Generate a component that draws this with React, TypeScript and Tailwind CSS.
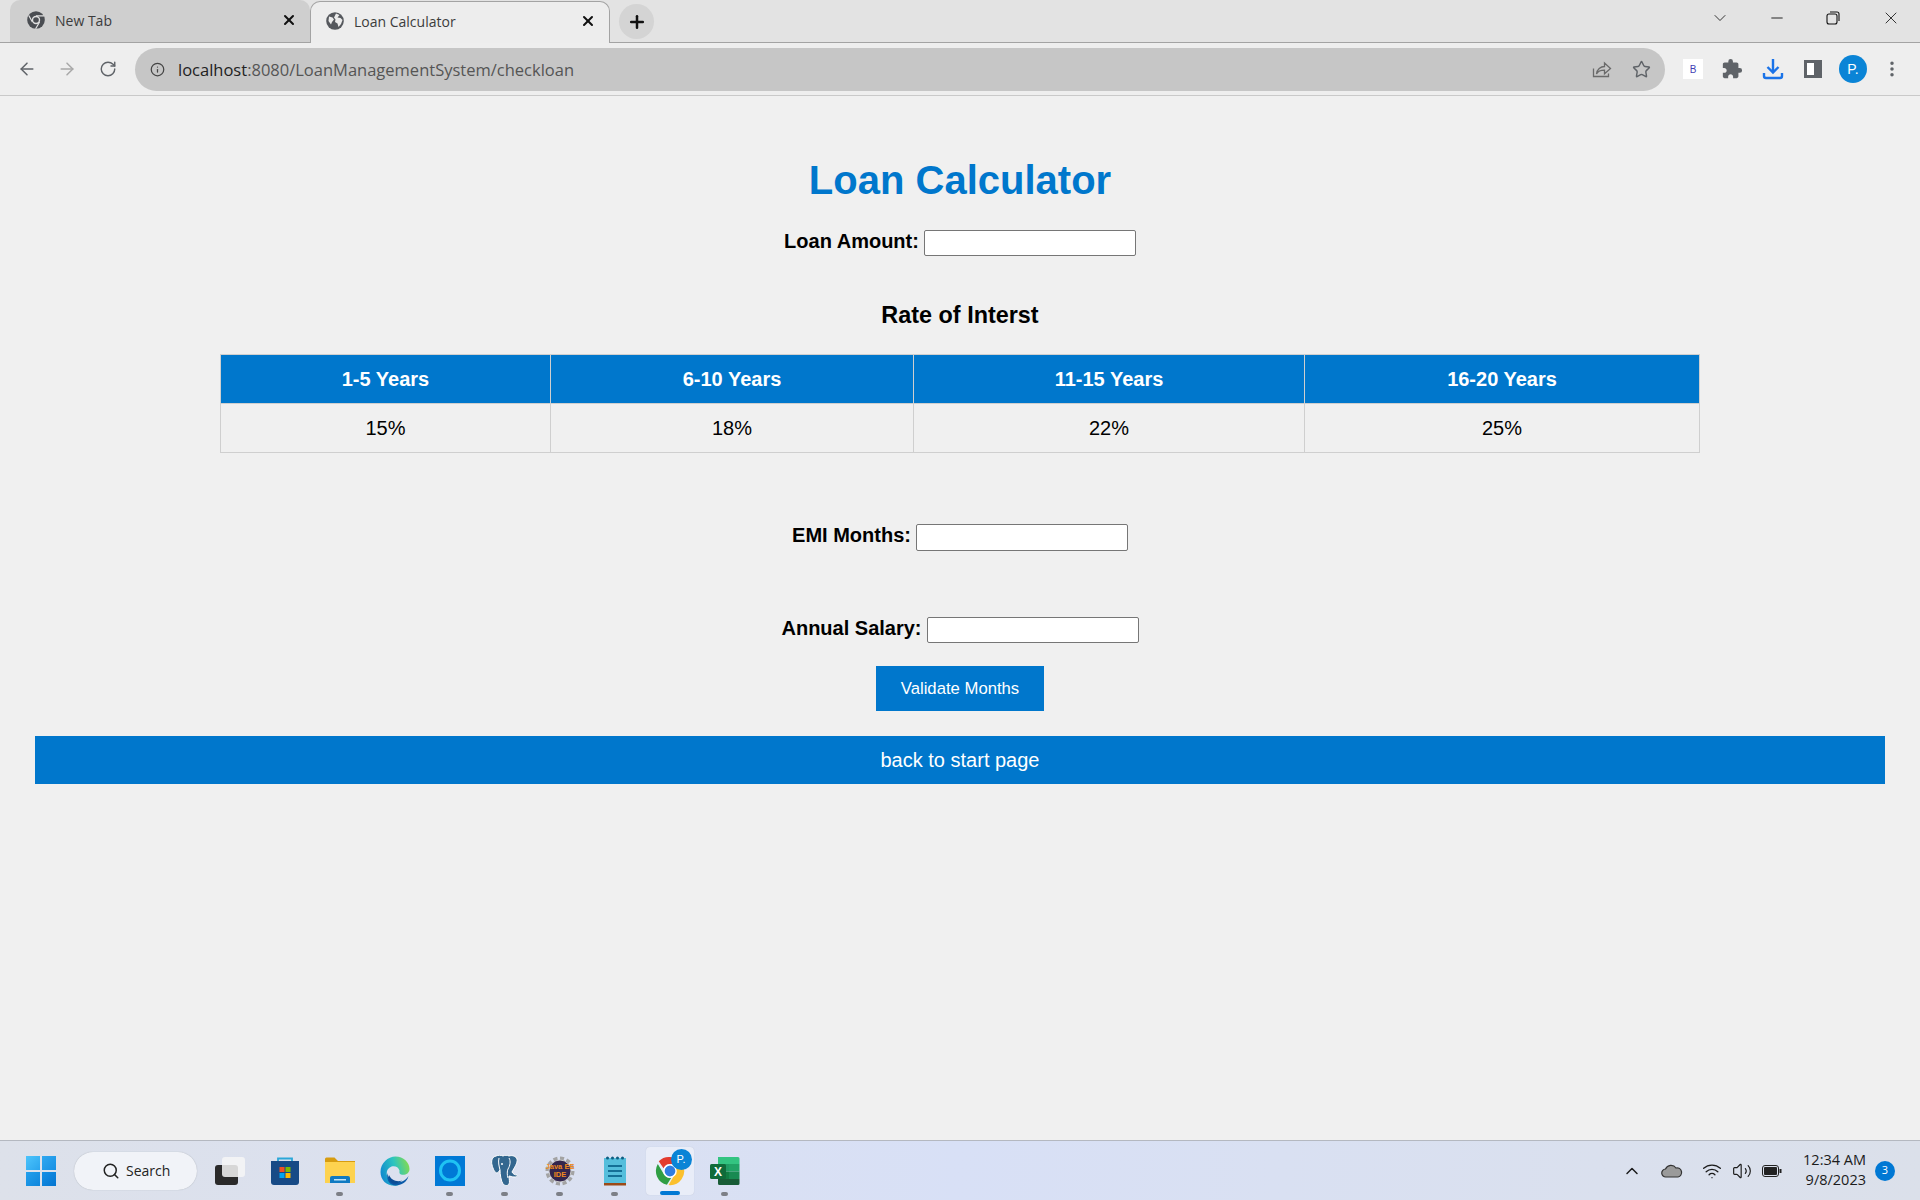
import { ArrowLeft, ArrowRight, RotateCw, Info, Star, X, Plus, ChevronDown, ChevronUp, Minus, Search, Wifi, Volume2, MoreVertical } from "lucide-react";
import { MdExtension } from "react-icons/md";

const CELL = "border border-[#cfcfcf] text-center";

function ChromeLogo({ size = 18 }: { size?: number }) {
  return (
    <svg width={size} height={size} viewBox="0 0 32 32">
      <path d="M16 1a15 15 0 0 1 13 7.5H16a7.5 7.5 0 0 0-6.9 4.6L4 5.6A15 15 0 0 1 16 1z" fill="#e33b2e" />
      <path d="M3 8.5l6.600 11.300a7.500 7.500 0 0 0 7.600 3.600L12.700 30.700A15 15 0 0 1 3 8.500z" fill="#2f9e44" />
      <path d="M29.600 9.600A15 15 0 0 1 14.500 31l6.500-11.200a7.500 7.500 0 0 0-.5-8.200z" fill="#fbc02d" />
      <circle cx="16" cy="16" r="6.500" fill="#2f7de1" stroke="#fff" strokeWidth="1.500" />
    </svg>
  );
}

function TabChromeMono() {
  return (
    <svg width="18" height="18" viewBox="0 0 18 18">
      <circle cx="9" cy="9" r="8.800" fill="#4a4d52" />
      <circle cx="9" cy="9" r="4.200" fill="#e0e0e0" />
      <circle cx="9" cy="9" r="2.800" fill="#4a4d52" />
      <path d="M9 4.800h8M5.400 11L1.800 4.500M12.600 11L8.600 17.800" stroke="#e0e0e0" strokeWidth="1.200" />
    </svg>
  );
}

function Globe() {
  return (
    <svg width="18" height="18" viewBox="0 0 18 18">
      <circle cx="9" cy="9" r="8.800" fill="#55585d" />
      <path d="M3 4.500l3.500 1 1.500 2-2 2.500-1 2.500-2.500-3.500zM10 1.500l3.500 1.500-2 2.500 3 .5 2 2-1.500 4-2.500 3-1-3.500-2.500-1.500 .5-2.500-1.500-2z" fill="#ececec" />
    </svg>
  );
}

function ShareIcon() {
  return (
    <svg width="20" height="20" viewBox="0 0 20 20" fill="none" stroke="#6a6a6a" strokeWidth="1.300">
      <path d="M1.500 9.500v8h15v-3" />
      <path d="M4.500 15c.5-4.500 4-7.500 8-7.500V4l6 5.500-6 5.300v-3.600c-3.500 0-6.500 1-8 3.800z" />
    </svg>
  );
}

function StoreIcon() {
  return (
    <svg width="30" height="30" viewBox="0 0 30 30">
      <path d="M8 6V2.500h14V6" fill="none" stroke="#2aa7d8" strokeWidth="1.800" />
      <path d="M1 5h28v21a3 3 0 0 1-3 3H4a3 3 0 0 1-3-3z" fill="#174a86" />
      <rect x="9.500" y="11" width="5" height="5" fill="#f25022" />
      <rect x="15.500" y="11" width="5" height="5" fill="#7fba00" />
      <rect x="9.500" y="17" width="5" height="5" fill="#00a4ef" />
      <rect x="15.500" y="17" width="5" height="5" fill="#ffb900" />
    </svg>
  );
}

function FolderIcon() {
  return (
    <svg width="30" height="28" viewBox="0 0 30 28">
      <path d="M0 2a1.500 1.500 0 0 1 1.500-1.500h8L13 4h17v8H0z" fill="#d79c10" />
      <path d="M0 5h30v21H0z" fill="#fdd24f" />
      <path d="M5 26v-5a2 2 0 0 1 2-2h16a2 2 0 0 1 2 2v5z" fill="#0f7ac2" />
      <rect x="9" y="22" width="12" height="1.500" fill="#bfe3f7" />
    </svg>
  );
}

function EdgeIcon() {
  return (
    <svg width="30" height="30" viewBox="0 0 30 30">
      <defs>
        <linearGradient id="edgeA" x1="0" y1="0.700" x2="1" y2="0.400">
          <stop offset="0" stopColor="#0f86d0" />
          <stop offset="0.550" stopColor="#2cc4c0" />
          <stop offset="1" stopColor="#7ed957" />
        </linearGradient>
      </defs>
      <path d="M0.500 16C.5 7 8 .5 15.500 .5 23.500 .5 29.500 6.500 29.500 13c0 5-5 6.500-8.500 5.500-2-.7-1.500-2.500-1.500-4-1-3.500-4.500-5-8-4-4 1.500-5.500 5-4.500 9 1.500 6 6.500 9.500 12 10C8 31.500 .5 25 .5 16z" fill="url(#edgeA)" />
      <path d="M7.500 17c1 7 8 11 14.500 8.500 3-1 5-3 6.500-5.500-1.500 6-7 9.500-13 9.500-5.500 0-9.500-5-8-12.500z" fill="#0b5aa8" />
      <path d="M9 19c2 5 8 7.500 13 5.500-3 3-7 4-10 2.500-2.500-1.500-3.500-5-3-8z" fill="#0a4d96" />
    </svg>
  );
}

function AlexaIcon() {
  return (
    <svg width="30" height="30" viewBox="0 0 30 30">
      <rect width="30" height="30" fill="#0079d6" />
      <circle cx="15" cy="14.500" r="9.500" fill="none" stroke="#1fc3f3" strokeWidth="3" />
      <path d="M8.500 20l3.500 3-3 1.500z" fill="#1fc3f3" />
    </svg>
  );
}

function PostgresIcon() {
  return (
    <svg width="28" height="31" viewBox="0 0 28 31">
      <path d="M5 1C1 2 0 6 1 10c1 4 3 8 5 8 1 0 2-2 3-3 0 4 1 11 3 14 2 2 5 2 6 0 1-2 0-5 0-8 1 0 3 1 5 1 3 0 4-1 3-2-2 0-4-1-5-3 2-4 6-9 5-13-1-3-5-4-8-3-2-1-4-1-6 0-2-1-5-1-7 0z" fill="#33678f" stroke="#fff" strokeWidth="1" />
      <path d="M8 3c-1 4 0 8 1 12M18 3c2 3 1 8-1 11-1 2-1 6 0 9" fill="none" stroke="#fff" strokeWidth="1" />
      <circle cx="11" cy="9" r="1" fill="#fff" />
    </svg>
  );
}

function EclipseIcon() {
  return (
    <svg width="30" height="30" viewBox="0 0 30 30">
      <circle cx="15" cy="15" r="12.500" fill="none" stroke="#a3a3a3" strokeWidth="4" strokeDasharray="4 2.500" />
      <circle cx="15" cy="15" r="11" fill="#33264d" stroke="#c9c9c9" strokeWidth="1" />
      <text x="15" y="13" textAnchor="middle" fontFamily="Liberation Sans" fontWeight="700" fontSize="7.500" fill="#f08a1d">Java EE</text>
      <text x="15" y="21" textAnchor="middle" fontFamily="Liberation Sans" fontWeight="700" fontSize="7.500" fill="#f08a1d">IDE</text>
    </svg>
  );
}

function NotepadIcon() {
  return (
    <svg width="24" height="30" viewBox="0 0 24 30">
      <rect x="1" y="2" width="22" height="26" fill="#55bedc" />
      <rect x="1" y="27" width="22" height="2.500" fill="#9c4a17" />
      {[4, 9, 14, 19].map((x) => (
        <circle key={x} cx={x + 0.500} cy="2" r="1.500" fill="#0f5d80" />
      ))}
      {[9, 14, 19].map((y) => (
        <rect key={y} x="5" y={y} width="14" height="2" fill="#146f96" />
      ))}
    </svg>
  );
}

function ExcelIcon() {
  return (
    <svg width="30" height="30" viewBox="0 0 30 30">
      <path d="M8 1h20a1.500 1.500 0 0 1 1.500 1.500V8H8z" fill="#33c481" />
      <rect x="8" y="8" width="11" height="7.500" fill="#1f9c63" />
      <rect x="19" y="8" width="10.500" height="7.500" fill="#21a366" />
      <rect x="8" y="15.500" width="11" height="7.500" fill="#107c41" />
      <rect x="19" y="15.500" width="10.500" height="7.500" fill="#188a52" />
      <path d="M8 23h21.500v4.500A1.500 1.500 0 0 1 28 29H9.500A1.500 1.500 0 0 1 8 27.500z" fill="#185c37" />
      <rect x="0" y="8" width="16" height="15" rx="1.500" fill="#0f6b3a" />
      <text x="8" y="20" textAnchor="middle" fontFamily="Liberation Sans" fontWeight="700" fontSize="12" fill="#fff">X</text>
    </svg>
  );
}

function TaskItem({ children, dot, active }: { children: React.ReactNode; dot?: boolean; active?: boolean }) {
  return (
    <div className={`relative mx-[3.500px] flex h-[48px] w-[48px] flex-col items-center justify-center rounded-[4px] ${active ? "bg-[#e9edf8] shadow-[0_0_1px_#b9bfd0]" : ""}`}>
      {children}
      {dot && <span className="absolute bottom-[-1px] h-[4px] w-[7px] rounded-full bg-[#7c7f86]" />}
      {active && <span className="absolute bottom-0 h-[4px] w-[20px] rounded-full bg-[#0078d4]" />}
    </div>
  );
}

function FormRow({ label, inputHeight, lift }: { label: string; inputHeight: string; lift: string }) {
  return (
    <div className="flex items-center gap-[5px]">
      <label className={`${lift} text-[20px] font-bold leading-[23px]`}>{label}</label>
      <input className={`${inputHeight} w-[212px] rounded-[2px] border border-[#767676] bg-white`} />
    </div>
  );
}

export default function App() {
  return (
    <div className="flex h-[1200px] w-[1920px] flex-col overflow-hidden bg-[#f0f0f0] font-['Liberation_Sans',Arial,sans-serif]">
      {/* tab strip */}
      <div className="flex h-[43px] shrink-0 items-end border-b border-[#a3a3a3] bg-[#e3e3e3] pl-[10px] font-['Open_Sans',sans-serif] text-[14px] text-[#3c3c3c]">
        <div className="flex h-[42px] w-[300px] items-center rounded-t-[10px] bg-[#cfcfcf] pb-[2px] pl-[17px] pr-[13px]">
          <TabChromeMono />
          <span className="ml-[10px] flex-1">New Tab</span>
          <X size={16} strokeWidth={3} className="text-[#111]" />
        </div>
        <div className="relative top-px flex h-[42px] w-[300px] items-center rounded-t-[10px] border border-b-0 border-[#a3a3a3] bg-[#ededed] pb-[3px] pl-[15px] pr-[13px]">
          <Globe />
          <span className="ml-[10px] flex-1">Loan Calculator</span>
          <X size={16} strokeWidth={3} className="text-[#111]" />
        </div>
        <div className="mb-[3px] ml-[9px] flex h-[35px] w-[35px] items-center justify-center rounded-full bg-[#d4d4d4]">
          <Plus size={20} strokeWidth={3} className="text-[#111]" />
        </div>
        <div className="mb-[6px] ml-auto flex h-[36px] items-center text-[#111]">
          <ChevronDown size={20} strokeWidth={1} className="mr-[38px]" />
          <Minus size={18} strokeWidth={1.200} className="mr-[40px]" />
          <svg width="14" height="14" viewBox="0 0 14 14" className="mr-[41px]">
            <rect x="1" y="3" width="10" height="10" rx="2" fill="none" stroke="#111" strokeWidth="1.100" />
            <path d="M4 1h7a2 2 0 0 1 2 2v7" fill="none" stroke="#111" strokeWidth="1.100" />
          </svg>
          <X size={20} strokeWidth={1} className="mr-[19px]" />
        </div>
      </div>

      {/* toolbar */}
      <div className="flex h-[53px] shrink-0 items-center border-b border-[#c9c9c9] bg-[#eeeeee] pl-[17px]">
        <ArrowLeft size={20} strokeWidth={1.800} className="text-[#5f6368]" />
        <ArrowRight size={20} strokeWidth={1.800} className="ml-[20px] text-[#a8a8a8]" />
        <RotateCw size={18} strokeWidth={1.900} className="ml-[22px] text-[#5f6368]" />
        <div className="ml-[18px] flex h-[43px] w-[1530px] items-center rounded-full bg-[#c6c6c6] pl-[15px] pr-[14px] font-['Open_Sans',sans-serif] text-[16.500px] text-[#555]">
          <Info size={15} strokeWidth={2} className="text-[#444]" />
          <span className="ml-[13px] flex-1 pt-[2px]">
            <span className="text-[#222]">localhost</span>:8080/LoanManagementSystem/checkloan
          </span>
          <span className="pl-[2px]"><ShareIcon /></span>
          <Star size={19} strokeWidth={1.800} className="ml-[20px] text-[#5f6368]" />
        </div>
        <div className="ml-[18px] flex h-[20px] w-[20px] items-center justify-center bg-white text-[10px] text-[#3f3fb5]">B</div>
        <MdExtension size={22} className="ml-[18px] text-[#5f6368]" />
        <svg width="22" height="22" viewBox="0 0 22 22" className="ml-[19px]">
          <path d="M11 1v13M5.500 9l5.500 5.500L16.500 9" fill="none" stroke="#1a73e8" strokeWidth="2.400" />
          <path d="M2 15v3a2 2 0 0 0 2 2h14a2 2 0 0 0 2-2v-3" fill="none" stroke="#1a73e8" strokeWidth="2.400" />
        </svg>
        <div className="ml-[20px] flex h-[18px] w-[18px] justify-end border-[3px] border-[#5f6368] bg-white">
          <div className="h-full w-[5px] bg-[#5f6368]" />
        </div>
        <div className="ml-[17px] flex h-[28px] w-[28px] items-center justify-center rounded-full bg-[#0a84d6] text-[14px] text-white">P.</div>
        <MoreVertical size={20} strokeWidth={2.200} className="ml-[15px] text-[#5f6368]" />
      </div>

      {/* page */}
      <main className="flex flex-1 flex-col items-center px-[35px] text-black">
        <h1 className="mt-[61px] text-[40px] font-bold leading-[46px] text-[#0077cc]">Loan Calculator</h1>
        <div className="mt-[27px]">
          <FormRow label="Loan Amount:" inputHeight="h-[26px]" lift="-mt-[4px]" />
        </div>
        <h3 className="mt-[47px] text-[23.400px] font-bold leading-[24px]">Rate of Interst</h3>
        <table className="mt-[27px] w-[1480px] table-fixed border-collapse text-[20px]">
          <thead>
            <tr className="h-[49px] bg-[#0077cc] font-bold text-white">
              <th className={`${CELL} w-[330px]`}>1-5 Years</th>
              <th className={`${CELL} w-[363px]`}>6-10 Years</th>
              <th className={`${CELL} w-[391px]`}>11-15 Years</th>
              <th className={CELL}>16-20 Years</th>
            </tr>
          </thead>
          <tbody>
            <tr className="h-[49px]">
              <td className={CELL}>15%</td>
              <td className={CELL}>18%</td>
              <td className={CELL}>22%</td>
              <td className={CELL}>25%</td>
            </tr>
          </tbody>
        </table>
        <div className="mt-[71px]">
          <FormRow label="EMI Months:" inputHeight="h-[27px]" lift="-mt-[5px]" />
        </div>
        <div className="mt-[66px]">
          <FormRow label="Annual Salary:" inputHeight="h-[26px]" lift="-mt-[4px]" />
        </div>
        <button className="mt-[23px] h-[45px] w-[168px] bg-[#0077cc] text-[16.700px] text-white">Validate Months</button>
        <a className="mt-[25px] flex h-[48px] w-full items-center justify-center bg-[#0077cc] text-[20px] text-white">back to start page</a>
      </main>

      {/* taskbar */}
      <div className="flex h-[60px] shrink-0 items-center border-t border-[#b4b8c0] bg-gradient-to-r from-[#dde1ea] via-[#d8e0f6] to-[#dbe0ea] pl-[12px]">
        <div className="ml-[14px] grid h-[30px] w-[30px] grid-cols-2 gap-[2px]">
          <span className="bg-gradient-to-br from-[#4cc4fb] to-[#2aa5ee]" />
          <span className="bg-gradient-to-br from-[#2fa8f0] to-[#1690e4]" />
          <span className="bg-gradient-to-br from-[#22a0ec] to-[#0f86dc]" />
          <span className="bg-gradient-to-br from-[#1490e6] to-[#0675d0]" />
        </div>
        <div className="ml-[18px] flex h-[38px] w-[123px] items-center rounded-full bg-[#f1f3f8] pl-[28px] font-['Open_Sans',sans-serif] text-[14px] text-[#222] shadow-[0_0_1px_#9aa0aa]">
          <Search size={18} strokeWidth={2} />
          <span className="ml-[6px]">Search</span>
        </div>
        <div className="ml-[5px] flex">
          <TaskItem>
            <div className="relative h-[28px] w-[30px]">
              <span className="absolute bottom-0 left-0 h-[20px] w-[23px] rounded-[3px] bg-[#2a2a2a]" />
              <span className="absolute right-0 top-0 h-[20px] w-[23px] rounded-[3px] bg-[#f6f6f6]/85" />
            </div>
          </TaskItem>
          <TaskItem><StoreIcon /></TaskItem>
          <TaskItem dot><FolderIcon /></TaskItem>
          <TaskItem><EdgeIcon /></TaskItem>
          <TaskItem dot><AlexaIcon /></TaskItem>
          <TaskItem dot><PostgresIcon /></TaskItem>
          <TaskItem dot><EclipseIcon /></TaskItem>
          <TaskItem dot><NotepadIcon /></TaskItem>
          <TaskItem active>
            <ChromeLogo size={30} />
            <span className="absolute right-[2px] top-[2px] flex h-[21px] w-[21px] items-center justify-center rounded-full bg-[#0a84d6] text-[11px] text-white">P.</span>
          </TaskItem>
          <TaskItem dot><ExcelIcon /></TaskItem>
        </div>
        <div className="ml-auto flex items-center pr-[25px] text-[#1c1c1c]">
          <ChevronUp size={20} strokeWidth={1.800} />
          <svg width="22" height="14" viewBox="0 0 22 14" className="ml-[19px]">
            <path d="M5 13a4 4 0 0 1-.5-8A6 6 0 0 1 15 4a4.500 4.500 0 0 1 2 9z" fill="#9a9a9a" stroke="#333" strokeWidth="1.200" />
          </svg>
          <Wifi size={20} strokeWidth={1.600} className="ml-[19px]" />
          <Volume2 size={20} strokeWidth={1.400} className="ml-[10px]" />
          <svg width="20" height="12" viewBox="0 0 20 12" className="ml-[10px]">
            <rect x="0.500" y="0.500" width="16" height="11" rx="2.500" fill="none" stroke="#222" />
            <rect x="2" y="2" width="13" height="8" rx="1" fill="#222" />
            <rect x="17.500" y="4" width="2" height="4" fill="#222" />
          </svg>
          <div className="ml-[19px] -mt-px w-[65px] whitespace-nowrap text-right font-['Open_Sans',sans-serif] text-[14.500px] leading-[20px]">
            <div>12:34 AM</div>
            <div>9/8/2023</div>
          </div>
          <span className="ml-[9px] flex h-[20px] w-[20px] items-center justify-center rounded-full bg-[#0078d4] font-['Open_Sans',sans-serif] text-[11px] text-white">3</span>
        </div>
      </div>
    </div>
  );
}
